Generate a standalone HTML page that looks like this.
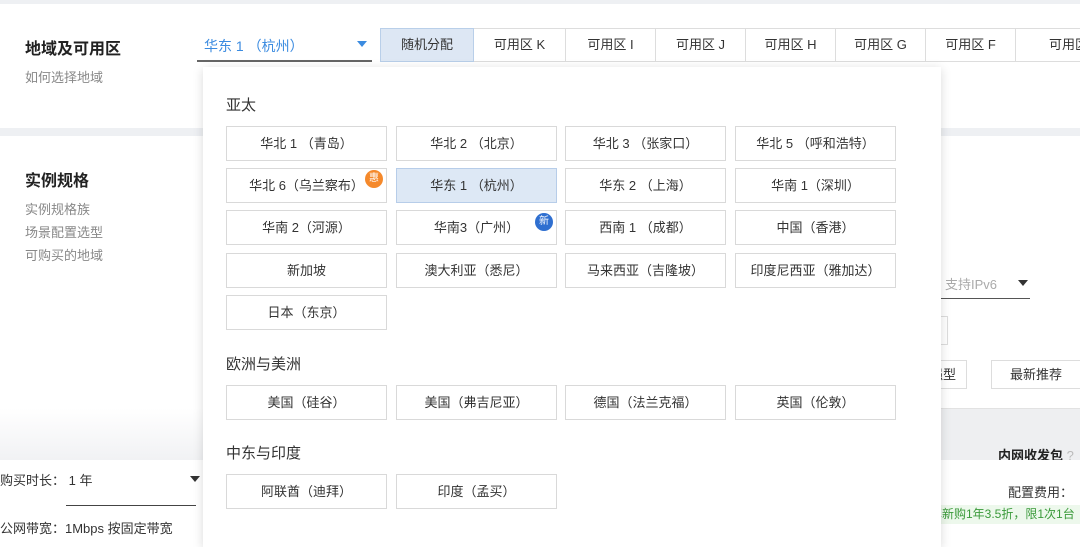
<!DOCTYPE html>
<html><head><meta charset="utf-8"><style>
*{margin:0;padding:0;box-sizing:border-box}
body{width:1080px;height:536px;overflow:hidden;background:#fff;position:relative;font-family:"Liberation Sans","Noto Sans CJK SC",sans-serif;color:#333;font-size:13px}
.a{position:absolute;white-space:nowrap}
.tab{position:absolute;top:28px;height:34px;border:1px solid #ddd;border-left:none;line-height:32px;text-align:center;font-size:13px;color:#333;background:#fff}
.btn{position:absolute;width:161px;height:35px;border:1px solid #d9d9d9;line-height:33px;text-align:center;font-size:13px;color:#333;background:#fff}
.h{position:absolute;left:226px;font-size:15px;color:#333}
.tri{position:absolute;width:0;height:0;border-left:5px solid transparent;border-right:5px solid transparent;border-top:6px solid #333}
</style></head><body>
<div class="a" style="left:0;top:0;width:1080px;height:4px;background:#eef0f3"></div>
<div class="a" style="left:0;top:128px;width:1080px;height:8px;background:#eef0f3"></div>
<div class="a" style="left:0;top:408px;width:1080px;height:52px;background:linear-gradient(#fff,#f1f2f4)"></div>
<div class="a" style="left:940px;top:408px;width:140px;height:52px;background:#eeeff1;border-top:1px solid #e2e2e2"></div>

<div class="a" style="left:25px;top:35px;font-size:16px;font-weight:bold;color:#222">地域及可用区</div>
<div class="a" style="left:25px;top:67px;color:#888">如何选择地域</div>
<div class="a" style="left:25px;top:167px;font-size:16px;font-weight:bold;color:#222">实例规格</div>
<div class="a" style="left:25px;top:199px;color:#888">实例规格族</div>
<div class="a" style="left:25px;top:222px;color:#888">场景配置选型</div>
<div class="a" style="left:25px;top:245px;color:#888">可购买的地域</div>

<div class="a" style="left:204px;top:36px;color:#3b8be0;font-size:14px">华东 1 （杭州）</div>
<div class="tri" style="left:357px;top:41px;border-top-color:#3b8be0"></div>
<div class="a" style="left:197px;top:60px;width:175px;height:2px;background:#666"></div>

<div class="tab" style="left:380px;width:94px;border-left:1px solid #b9cfe9;background:#dde7f4;border-color:#b9cfe9">随机分配</div>
<div class="tab" style="left:474px;width:92px">可用区 K</div>
<div class="tab" style="left:566px;width:90px">可用区 I</div>
<div class="tab" style="left:656px;width:90px">可用区 J</div>
<div class="tab" style="left:746px;width:90px">可用区 H</div>
<div class="tab" style="left:836px;width:90px">可用区 G</div>
<div class="tab" style="left:926px;width:90px">可用区 F</div>
<div class="tab" style="left:1016px;width:90px;text-align:left;padding-left:33px">可用区</div>

<div class="a" style="left:945px;top:274px;color:#aaa;font-size:13px">支持IPv6</div>
<div class="tri" style="left:1018px;top:280px"></div>
<div class="a" style="left:928px;top:298px;width:102px;height:1px;background:#555"></div>
<div class="a" style="left:920px;top:316px;width:28px;height:29px;border:1px solid #ddd"></div>
<div class="a" style="left:900px;top:360px;width:67px;height:29px;border:1px solid #ddd;line-height:27px;text-align:right;padding-right:10px">强型</div>
<div class="a" style="left:991px;top:360px;width:100px;height:29px;border:1px solid #ddd;line-height:27px;padding-left:18px">最新推荐</div>
<div class="a" style="left:998px;top:445px;font-weight:bold;color:#222">内网收发包 <span style="color:#bbb;font-weight:normal">?</span></div>

<div class="a" style="left:0;top:460px;width:1080px;height:76px;background:#fff"></div>
<div class="a" style="left:0;top:470px">购买时长：&nbsp;1 年</div>
<div class="tri" style="left:190px;top:476px"></div>
<div class="a" style="left:66px;top:505px;width:130px;height:1px;background:#444"></div>
<div class="a" style="left:0;top:518px">公网带宽：1Mbps 按固定带宽</div>
<div class="a" style="left:1008px;top:482px">配置费用：</div>
<div class="a" style="left:930px;top:505px;width:150px;height:19px;background:#edf8ec;color:#3a9a3a;line-height:19px;font-size:12px">享新购1年3.5折，限1次1台</div>

<div class="a" style="left:203px;top:67px;width:738px;height:480px;background:#fff;box-shadow:0 2px 10px rgba(0,0,0,.15)"></div>
<div class="h" style="top:94px">亚太</div>
<div class="h" style="top:353px">欧洲与美洲</div>
<div class="h" style="top:442px">中东与印度</div>

<div class="btn" style="left:226px;top:126px">华北 1 （青岛）</div>
<div class="btn" style="left:396px;top:126px">华北 2 （北京）</div>
<div class="btn" style="left:565px;top:126px">华北 3 （张家口）</div>
<div class="btn" style="left:735px;top:126px">华北 5 （呼和浩特）</div>
<div class="btn" style="left:226px;top:168px">华北 6（乌兰察布）</div>
<div class="a" style="left:365px;top:170px;width:18px;height:18px;border-radius:50%;background:#f5892b;color:#fff;font-size:10px;line-height:18px;text-align:center">惠</div>
<div class="btn" style="left:396px;top:168px;background:#dde8f5;border-color:#b7cde9">华东 1 （杭州）</div>
<div class="btn" style="left:565px;top:168px">华东 2 （上海）</div>
<div class="btn" style="left:735px;top:168px">华南 1（深圳）</div>
<div class="btn" style="left:226px;top:210px">华南 2（河源）</div>
<div class="btn" style="left:396px;top:210px">华南3（广州）</div>
<div class="a" style="left:535px;top:213px;width:18px;height:18px;border-radius:50%;background:#2f6fd0;color:#fff;font-size:10px;line-height:18px;text-align:center">新</div>
<div class="btn" style="left:565px;top:210px">西南 1 （成都）</div>
<div class="btn" style="left:735px;top:210px">中国（香港）</div>
<div class="btn" style="left:226px;top:253px">新加坡</div>
<div class="btn" style="left:396px;top:253px">澳大利亚（悉尼）</div>
<div class="btn" style="left:565px;top:253px">马来西亚（吉隆坡）</div>
<div class="btn" style="left:735px;top:253px">印度尼西亚（雅加达）</div>
<div class="btn" style="left:226px;top:295px">日本（东京）</div>
<div class="btn" style="left:226px;top:385px">美国（硅谷）</div>
<div class="btn" style="left:396px;top:385px">美国（弗吉尼亚）</div>
<div class="btn" style="left:565px;top:385px">德国（法兰克福）</div>
<div class="btn" style="left:735px;top:385px">英国（伦敦）</div>
<div class="btn" style="left:226px;top:474px">阿联酋（迪拜）</div>
<div class="btn" style="left:396px;top:474px">印度（孟买）</div>
</body></html>
